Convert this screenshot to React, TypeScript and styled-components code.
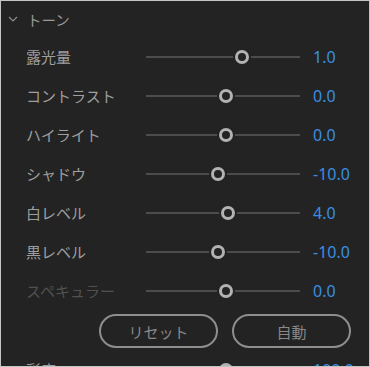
import React from 'react';
import styled, { createGlobalStyle } from 'styled-components';

const GlobalStyle = createGlobalStyle`
  html, body {
    margin: 0;
    padding: 0;
    background: #232323;
  }
  body {
    font-family: "Noto Sans CJK JP", "Noto Sans", sans-serif;
  }
`;

interface Tone {
  label: string;
  value: string;
  pos: number; // thumb center, px from track start
  dim?: boolean;
}

const tones: Tone[] = [
  { label: '露光量', value: '1.0', pos: 96 },
  { label: 'コントラスト', value: '0.0', pos: 80 },
  { label: 'ハイライト', value: '0.0', pos: 80 },
  { label: 'シャドウ', value: '-10.0', pos: 72 },
  { label: '白レベル', value: '4.0', pos: 82 },
  { label: '黒レベル', value: '-10.0', pos: 72 },
  { label: 'スペキュラー', value: '0.0', pos: 80, dim: true },
];

const TRACK_W = 154;

const Frame = styled.div`
  box-sizing: border-box;
  width: 370px;
  height: 367px;
  border: 1px solid #c4c4c4;
  background: #232323;
  overflow: hidden;
`;

const Header = styled.div`
  display: flex;
  align-items: center;
  height: 36px;
  padding-left: 7px;
  gap: 9px;
  color: #9a9a9a;
  font-size: 14.5px;
`;

const Row = styled.div`
  display: grid;
  grid-template-columns: 107px ${TRACK_W}px 1fr;
  column-gap: 13px;
  align-items: center;
  height: 39px;
  padding-left: 25px;
`;

const Label = styled.span<{ $dim?: boolean }>`
  font-size: 15px;
  color: ${p => (p.$dim ? '#515151' : '#9e9e9e')};
  white-space: nowrap;
`;

const Track = styled.div`
  position: relative;
  height: 2px;
  background: #4c4c4c;
`;

const Thumb = styled.div`
  position: absolute;
  top: 50%;
  width: 14px;
  height: 14px;
  box-sizing: border-box;
  border-radius: 50%;
  border: 3px solid #b2b2b2;
  background: #232323;
  box-shadow: 0 0 0 2px #232323;
  transform: translate(-50%, -50%);
`;

const Value = styled.span`
  font-size: 16px;
  color: #3a8ee0;
  font-family: "Noto Sans", sans-serif;
  padding-top: 1px;
`;

const Buttons = styled.div`
  display: flex;
  gap: 14px;
  padding: 4px 0 0 98px;
  height: 36px;
`;

const PillButton = styled.button`
  box-sizing: border-box;
  width: 119px;
  height: 34px;
  border-radius: 17px;
  border: 2px solid #8e8e8e;
  background: transparent;
  color: #888888;
  font-family: "Noto Sans CJK JP", sans-serif;
  font-size: 15px;
  padding: 0;
`;

const Chevron = () => (
  <svg width="10" height="8" viewBox="0 0 10 8">
    <path d="M1 2 L5 6 L9 2" fill="none" stroke="#8c8c8c" strokeWidth="1.2" />
  </svg>
);

const SliderRow: React.FC<{ tone: Tone }> = ({ tone }) => (
  <Row>
    <Label $dim={tone.dim}>{tone.label}</Label>
    <Track>
      <Thumb style={{ left: tone.pos }} />
    </Track>
    <Value>{tone.value}</Value>
  </Row>
);

export default function App() {
  return (
    <>
      <GlobalStyle />
      <Frame>
        <Header>
          <Chevron />
          <span>トーン</span>
        </Header>
        {tones.map(t => (
          <SliderRow key={t.label} tone={t} />
        ))}
        <Buttons>
          <PillButton>リセット</PillButton>
          <PillButton>自動</PillButton>
        </Buttons>
        <SliderRow tone={{ label: '彩度', value: '100.0', pos: 80 }} />
      </Frame>
    </>
  );
}
